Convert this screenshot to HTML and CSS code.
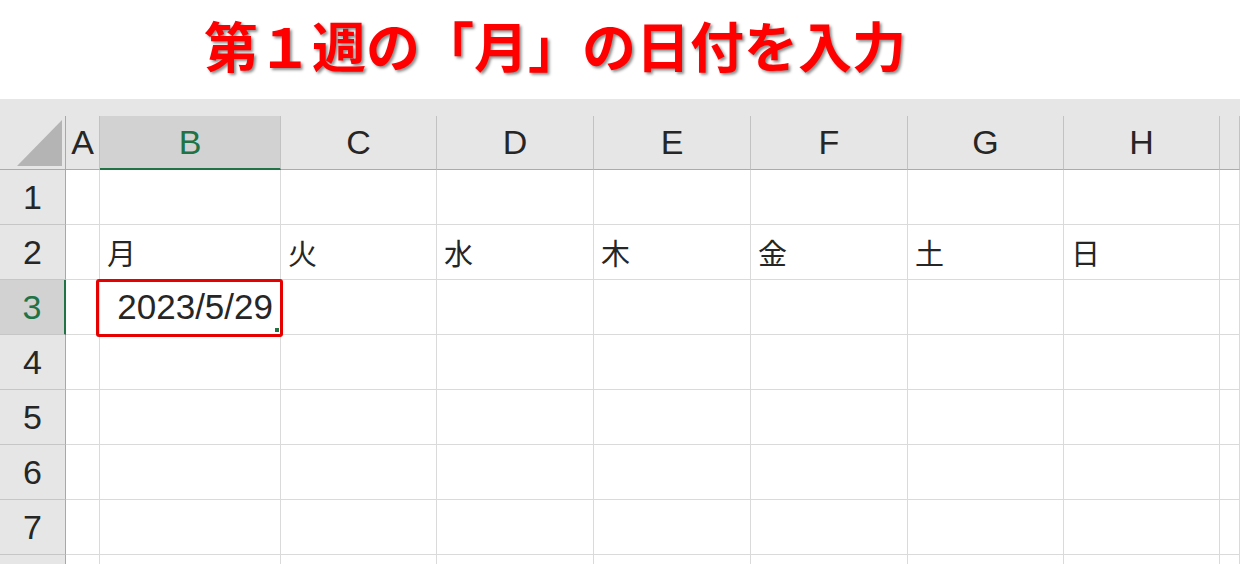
FILE: index.html
```html
<!doctype html>
<html>
<head>
<meta charset="UTF-8">
<title>第１週の「月」の日付を入力</title>
<link rel="stylesheet" href="styles.css">
</head>
<body>
	<div class="title">第１週の「月」の日付を入力</div>
	<div class="sheet">
		<div class="row head">
			<div class="corner">
				<svg width="65" height="53" viewBox="0 0 65 53"><polygon points="62,4 62,50 17,50" fill="#b4b4b4"/></svg>
			</div>
			<div>A</div>
			<div class="on">B</div>
			<div>C</div>
			<div>D</div>
			<div>E</div>
			<div>F</div>
			<div>G</div>
			<div>H</div>
			<div></div>
		</div>
		<div class="row">
			<div class="num">1</div>
			<div class="cell"></div><div class="cell"></div><div class="cell"></div><div class="cell"></div><div class="cell"></div><div class="cell"></div><div class="cell"></div><div class="cell"></div><div class="cell"></div>
		</div>
		<div class="row">
			<div class="num">2</div>
			<div class="cell"></div>
			<div class="cell">月</div>
			<div class="cell">火</div>
			<div class="cell">水</div>
			<div class="cell">木</div>
			<div class="cell">金</div>
			<div class="cell">土</div>
			<div class="cell">日</div>
			<div class="cell"></div>
		</div>
		<div class="row">
			<div class="num on">3</div>
			<div class="cell"></div>
			<div class="cell date">2023/5/29<span class="handle"></span><span class="mark"></span></div>
			<div class="cell"></div><div class="cell"></div><div class="cell"></div><div class="cell"></div><div class="cell"></div><div class="cell"></div><div class="cell"></div>
		</div>
		<div class="row">
			<div class="num">4</div>
			<div class="cell"></div><div class="cell"></div><div class="cell"></div><div class="cell"></div><div class="cell"></div><div class="cell"></div><div class="cell"></div><div class="cell"></div><div class="cell"></div>
		</div>
		<div class="row">
			<div class="num">5</div>
			<div class="cell"></div><div class="cell"></div><div class="cell"></div><div class="cell"></div><div class="cell"></div><div class="cell"></div><div class="cell"></div><div class="cell"></div><div class="cell"></div>
		</div>
		<div class="row">
			<div class="num">6</div>
			<div class="cell"></div><div class="cell"></div><div class="cell"></div><div class="cell"></div><div class="cell"></div><div class="cell"></div><div class="cell"></div><div class="cell"></div><div class="cell"></div>
		</div>
		<div class="row">
			<div class="num">7</div>
			<div class="cell"></div><div class="cell"></div><div class="cell"></div><div class="cell"></div><div class="cell"></div><div class="cell"></div><div class="cell"></div><div class="cell"></div><div class="cell"></div>
		</div>
		<div class="row">
			<div class="num"></div>
			<div class="cell"></div><div class="cell"></div><div class="cell"></div><div class="cell"></div><div class="cell"></div><div class="cell"></div><div class="cell"></div><div class="cell"></div><div class="cell"></div>
		</div>
	</div>
</body>
</html>
```

FILE: styles.css
```css
* {
	box-sizing: border-box;
}
html, body {
	overflow: hidden;
}
body {
	margin: 0;
	background: #ffffff;
	font-family: "Liberation Sans", Arial, sans-serif;
}
.title {
	height: 99px;
	display: flex;
	align-items: center;
	padding-left: 204px;
	padding-bottom: 10px;
	font-family: "Noto Sans CJK JP", sans-serif;
	font-weight: 700;
	font-size: 54px;
	color: #ff0000;
	text-shadow: 2px 2px 3px rgba(0, 0, 0, 0.45);
}
.row {
	display: grid;
	grid-template-columns: 66px 34px 181px 156px 157px 157px 157px 156px 156px 1fr;
	height: 55px;
}
.head {
	height: 71px;
	padding-top: 17px;
	background: #e6e6e6;
}
.head > div {
	display: flex;
	align-items: center;
	justify-content: center;
	border-right: 1px solid #c2c2c2;
	border-bottom: 1px solid #ababab;
	font-size: 34px;
	color: #262626;
}
.head > .corner {
	border-right-color: #a8a8a8;
}
.head > .on {
	background: #d2d2d2;
	color: #217346;
	border-bottom: 2px solid #217346;
}
.cell {
	display: flex;
	align-items: center;
	padding-left: 7px;
	border-right: 1px solid #dadada;
	border-bottom: 1px solid #dadada;
	font-family: "Noto Sans CJK JP", sans-serif;
	font-size: 29px;
	color: #262626;
}
.num {
	display: flex;
	align-items: center;
	justify-content: center;
	background: #e6e6e6;
	border-right: 1px solid #a8a8a8;
	border-bottom: 1px solid #c6c6c6;
	font-size: 34px;
	color: #262626;
}
.num.on {
	background: #d2d2d2;
	color: #217346;
	border-right: 2px solid #217346;
}
.date {
	position: relative;
	justify-content: flex-end;
	padding-right: 7px;
	font-family: "Liberation Sans", Arial, sans-serif;
	font-size: 35px;
}
.handle {
	position: absolute;
	right: 1px;
	bottom: 2px;
	width: 4px;
	height: 4px;
	background: #217346;
}
.mark {
	position: absolute;
	top: -1px;
	left: -4px;
	right: -3px;
	bottom: -3px;
	border: 3px solid #e60000;
	border-radius: 3px;
}
```
